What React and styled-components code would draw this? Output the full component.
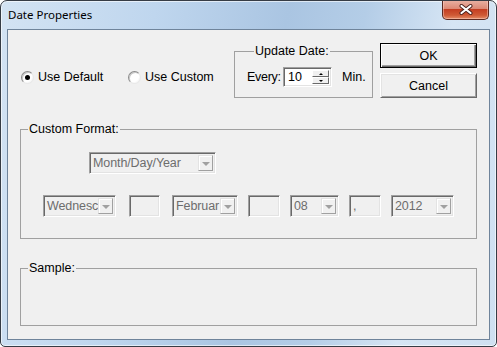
import React from 'react';
import styled, { createGlobalStyle } from 'styled-components';

const GlobalStyle = createGlobalStyle`
  html, body {
    margin: 0;
    padding: 0;
    background: #ffffff;
  }
  body {
    font-family: "Liberation Sans", Arial, sans-serif;
    font-size: 12.5px;
    color: #000;
  }
  * {
    box-sizing: border-box;
  }
`;

const Window = styled.div`
  width: 497px;
  height: 347px;
  border: 1px solid #363c45;
  border-radius: 7px 7px 5px 5px;
  background: linear-gradient(100deg, #d3e3f3 0%, #bfd6ee 28%, #aac5e2 52%, #b4cde7 66%, #d6e5f4 82%, #cfe0f1 100%);
  box-shadow: inset 0 0 0 1px rgba(255, 255, 255, 0.6);
  padding: 0 6px 6px 6px;
  display: flex;
  flex-direction: column;
  overflow: hidden;
`;

const TitleBar = styled.div`
  height: 28px;
  display: flex;
  align-items: flex-start;
`;

const TitleText = styled.div`
  font-family: "Noto Sans", "Open Sans", sans-serif;
  font-size: 11.5px;
  line-height: 16px;
  padding-top: 6px;
  margin-left: 1px;
  color: #000;
`;

const CloseButton = styled.div`
  margin-left: auto;
  margin-right: 1px;
  margin-top: -1px;
  width: 47px;
  height: 20px;
  border: 1px solid #5b2a22;
  border-top: none;
  border-radius: 0 0 5px 5px;
  background: linear-gradient(180deg, #eab3a5 0%, #dc8a76 45%, #c43e22 50%, #cf5a36 80%, #e58d68 100%);
  box-shadow: inset 0 0 0 1px rgba(255, 220, 210, 0.45);
  display: flex;
  align-items: center;
  justify-content: center;
`;

const Client = styled.div`
  flex: 1;
  border: 1px solid #6f849b;
  background: #f0f0f0;
  padding: 13px 12px 0 12px;
  display: flex;
  flex-direction: column;
`;

const TopRow = styled.div`
  display: flex;
  align-items: flex-start;
  height: 55px;
`;

const RadioSet = styled.div`
  width: 214px;
  margin-top: 27px;
  padding-left: 1px;
  display: flex;
  align-items: center;
  height: 14px;
`;

const RadioItem = styled.label`
  display: flex;
  align-items: center;
  width: ${p => p.$w}px;
  line-height: 14px;
`;

const RadioDot = styled.span`
  position: relative;
  width: 13px;
  height: 13px;
  border-radius: 50%;
  border: 1px solid;
  border-color: #8a8a8a #e8e8e8 #e8e8e8 #8a8a8a;
  background: radial-gradient(circle at 40% 40%, #ffffff 55%, #e4e4e4 100%);
  box-shadow: inset 1px 1px 0 #c8c8c8;
  margin-right: 4px;
  flex: none;

  &::after {
    content: '';
    display: ${p => (p.$checked ? 'block' : 'none')};
    position: absolute;
    left: 3px;
    top: 3px;
    width: 5px;
    height: 5px;
    border-radius: 50%;
    background: #000;
  }
`;

const Group = styled.fieldset`
  margin: ${p => p.$mt || 0}px 0 0 0;
  width: ${p => p.$w}px;
  height: ${p => p.$h}px;
  border: 1px solid #a0a0a0;
  padding: ${p => p.$pad || '0'};
  min-width: 0;
`;

const Legend = styled.legend`
  margin-left: 7px;
  padding: 0 1px;
  line-height: 14px;
  font-size: 12.5px;
  color: #000;
`;

const EveryRow = styled.div`
  display: flex;
  align-items: center;
`;

const EveryLabel = styled.span`
  width: 36px;
  letter-spacing: -0.3px;
`;

const SpinBox = styled.div`
  width: 49px;
  height: 20px;
  display: flex;
  align-items: stretch;
  border: 1px solid;
  border-color: #a0a0a0 #fff #fff #a0a0a0;
  box-shadow: inset 1px 1px 0 #696969, inset -1px -1px 0 #e3e3e3;
  background: #fff;
  padding: 2px 2px 2px 4px;
`;

const SpinValue = styled.span`
  flex: 1;
  line-height: 15px;
`;

const SpinArrows = styled.div`
  width: 17px;
  display: flex;
  flex-direction: column;
`;

const SpinBtn = styled.div`
  flex: 1;
  background: #f0f0f0;
  border: 1px solid;
  border-color: #fff #696969 #696969 #fff;
  display: flex;
  align-items: center;
  justify-content: center;

  &::after {
    content: '';
    border-left: 2px solid transparent;
    border-right: 2px solid transparent;
    ${p => (p.$up ? 'border-bottom: 2px solid #000;' : 'border-top: 2px solid #000;')}
  }
`;

const MinLabel = styled.span`
  margin-left: 10px;
`;

const ButtonColumn = styled.div`
  margin-left: auto;
  width: 97px;
  display: flex;
  flex-direction: column;
  gap: 5px;
`;

const DialogButton = styled.div`
  height: 25px;
  display: flex;
  align-items: center;
  justify-content: center;
  background: #f0f0f0;
  border: 1px solid;
  border-color: ${p => (p.$default ? '#000 #000 #000 #000' : '#fff #696969 #696969 #fff')};
  box-shadow: ${p =>
    p.$default
      ? 'inset 1px 1px 0 #fff, inset -1px -1px 0 #696969, inset -2px -2px 0 #a0a0a0'
      : 'inset 1px 1px 0 #e3e3e3, inset -1px -1px 0 #a0a0a0'};
  color: #000;
`;

const FormatRow = styled.div`
  display: flex;
  align-items: center;
  margin-top: ${p => p.$mt || 0}px;
  padding-left: ${p => p.$pl || 0}px;
`;

const Combo = styled.div`
  width: ${p => p.$w}px;
  height: 22px;
  margin-left: ${p => p.$ml || 0}px;
  display: flex;
  align-items: stretch;
  border: 1px solid;
  border-color: #a0a0a0 #fff #fff #a0a0a0;
  box-shadow: inset 1px 1px 0 #696969, inset -1px -1px 0 #e3e3e3;
  padding: 2px 2px 2px 2px;
  background: #f0f0f0;
  flex: none;
`;

const ComboText = styled.span`
  flex: 1;
  overflow: hidden;
  white-space: nowrap;
  color: #6d6d6d;
  line-height: 16px;
  padding-left: 1px;
  letter-spacing: -0.1px;
`;

const DropButton = styled.div`
  width: 15px;
  flex: none;
  background: #f0f0f0;
  border: 1px solid;
  border-color: #e3e3e3 #a0a0a0 #a0a0a0 #e3e3e3;
  box-shadow: inset 1px 1px 0 #fff;
  display: flex;
  align-items: center;
  justify-content: center;

  &::after {
    content: '';
    border-left: 4px solid transparent;
    border-right: 4px solid transparent;
    border-top: 4px solid #a0a0a0;
    margin-top: 1px;
  }
`;

const CloseGlyph = () => (
  <svg width="14" height="11" viewBox="0 0 14 11">
    <path d="M2.5 2 L11.5 9 M11.5 2 L2.5 9" stroke="#4a1f1a" strokeWidth="4" strokeLinecap="round" />
    <path d="M2.5 2 L11.5 9 M11.5 2 L2.5 9" stroke="#ffffff" strokeWidth="2.2" strokeLinecap="round" />
  </svg>
);

const dateParts = [
  { w: 73, ml: 0, text: 'Wednesc', drop: true },
  { w: 31, ml: 13, text: '', drop: false },
  { w: 66, ml: 12, text: 'Februar', drop: true },
  { w: 32, ml: 10, text: '', drop: false },
  { w: 49, ml: 10, text: '08', drop: true },
  { w: 32, ml: 10, text: ',', drop: false },
  { w: 63, ml: 10, text: '2012', drop: true },
];

export default function App() {
  return (
    <>
      <GlobalStyle />
      <Window>
        <TitleBar>
          <TitleText>Date Properties</TitleText>
          <CloseButton>
            <CloseGlyph />
          </CloseButton>
        </TitleBar>
        <Client>
          <TopRow>
            <RadioSet>
              <RadioItem $w={107}>
                <RadioDot $checked />
                Use Default
              </RadioItem>
              <RadioItem $w={100}>
                <RadioDot />
                Use Custom
              </RadioItem>
            </RadioSet>
            <Group $w={139} $h={54} $mt={1} $pad="9px 0 0 12px">
              <Legend>Update Date:</Legend>
              <EveryRow>
                <EveryLabel>Every:</EveryLabel>
                <SpinBox>
                  <SpinValue>10</SpinValue>
                  <SpinArrows>
                    <SpinBtn $up />
                    <SpinBtn />
                  </SpinArrows>
                </SpinBox>
                <MinLabel>Min.</MinLabel>
              </EveryRow>
            </Group>
            <ButtonColumn>
              <DialogButton $default>OK</DialogButton>
              <DialogButton>Cancel</DialogButton>
            </ButtonColumn>
          </TopRow>
          <Group $w={457} $h={117} $mt={24} $pad="16px 0 0 0">
            <Legend>Custom Format:</Legend>
            <FormatRow $pl={68}>
              <Combo $w={127}>
                <ComboText>Month/Day/Year</ComboText>
                <DropButton />
              </Combo>
            </FormatRow>
            <FormatRow $pl={22} $mt={21}>
              {dateParts.map((part, i) => (
                <Combo key={i} $w={part.w} $ml={part.ml}>
                  <ComboText>{part.text}</ComboText>
                  {part.drop && <DropButton />}
                </Combo>
              ))}
            </FormatRow>
          </Group>
          <Group $w={457} $h={65} $mt={22}>
            <Legend>Sample:</Legend>
          </Group>
        </Client>
      </Window>
    </>
  );
}
